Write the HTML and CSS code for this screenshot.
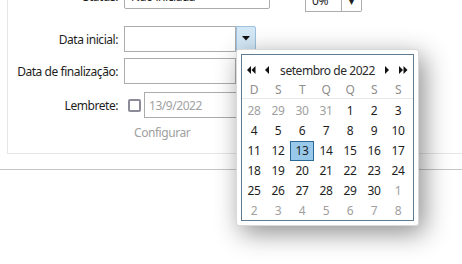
FILE: index.html
```html
<!DOCTYPE html>
<html lang="pt">
<head>
  <meta charset="UTF-8">
  <title>Tarefa</title>
  <link rel="stylesheet" href="styles.css">
</head>
<body>
  <div class="panel">
    <div class="row row-status">
      <span class="row-label">Status:</span>
      <div class="select">Não iniciada<span class="caret">&#9662;</span></div>
      <div class="percent">
        <span class="percent-value">0%</span>
        <span class="spin">&#9662;</span>
      </div>
    </div>

    <div class="row row-start">
      <span class="row-label">Data inicial:</span>
      <div class="input date-input"></div>
      <div class="drop-btn">
        <svg width="8" height="5" viewBox="0 0 8 5"><path d="M0 0H8L4 4.5Z" fill="#111"/></svg>
      </div>
    </div>

    <div class="row row-end">
      <span class="row-label">Data de finalização:</span>
      <div class="input date-input"></div>
    </div>

    <div class="row row-reminder">
      <span class="row-label">Lembrete:</span>
      <span class="checkbox"></span>
      <div class="input reminder-input">13/9/2022</div>
    </div>

    <div class="configure">Configurar</div>
  </div>

  <div class="divider"></div>

  <!-- popup do calendário -->
  <div class="calendar">
    <div class="calendar-inner">
      <div class="cal-header">
        <span class="nav nav-left">
          <svg width="9" height="8" viewBox="0 0 9 8"><path d="M0 4L4 0V8Z M4.5 4L8.5 0V8Z" fill="#111"/></svg>
          <svg width="5" height="8" viewBox="0 0 5 8"><path d="M0 4L4 0V8Z" fill="#111"/></svg>
        </span>
        <span class="cal-title">setembro de 2022</span>
        <span class="nav nav-right">
          <svg width="5" height="8" viewBox="0 0 5 8"><path d="M4 4L0 0V8Z" fill="#111"/></svg>
          <svg width="9" height="8" viewBox="0 0 9 8"><path d="M4 4L0 0V8Z M8.5 4L4.5 0V8Z" fill="#111"/></svg>
        </span>
      </div>
      <div class="cal-days">
        <span>D</span><span>S</span><span>T</span><span>Q</span><span>Q</span><span>S</span><span>S</span>
      </div>
      <div class="cal-grid">
        <span class="other">28</span><span class="other">29</span><span class="other">30</span><span class="other">31</span><span>1</span><span>2</span><span>3</span>
        <span>4</span><span>5</span><span>6</span><span>7</span><span>8</span><span>9</span><span>10</span>
        <span>11</span><span>12</span><span class="selected">13</span><span>14</span><span>15</span><span>16</span><span>17</span>
        <span>18</span><span>19</span><span>20</span><span>21</span><span>22</span><span>23</span><span>24</span>
        <span>25</span><span>26</span><span>27</span><span>28</span><span>29</span><span>30</span><span class="other">1</span>
        <span class="other">2</span><span class="other">3</span><span class="other">4</span><span class="other">5</span><span class="other">6</span><span class="other">7</span><span class="other">8</span>
      </div>
    </div>
  </div>
</body>
</html>
```

FILE: styles.css
```css
body {
  margin: 0;
  background: #fff;
  font-family: 'Noto Sans', sans-serif;
  font-size: 12px;
  letter-spacing: -0.45px;
  color: #1e1e1e;
  overflow: hidden;
}
.panel {
  margin: -17px 0 0 7px;
  border-left: 1px solid #e6e6e6;
  border-bottom: 1px solid #e6e6e6;
  padding-bottom: 13px;
}
.row {
  display: flex;
  align-items: center;
  height: 26px;
}
.row-label {
  width: 110px;
  padding-right: 6px;
  text-align: right;
}
.row-start {
  margin-top: 17px;
}
.row-end {
  margin-top: 6px;
}
.row-reminder {
  margin-top: 8px;
}
.select {
  width: 146px;
  height: 26px;
  box-sizing: border-box;
  border: 1px solid #acacac;
  border-radius: 2px;
  padding: 0 6px;
  display: flex;
  align-items: center;
  justify-content: space-between;
}
.caret {
  font-size: 10px;
}
.percent {
  display: flex;
  align-self: flex-start;
  margin: 5px 0 0 35px;
  height: 24px;
}
.percent-value {
  width: 37px;
  box-sizing: border-box;
  border: 1px solid #acacac;
  padding: 3px 0 0 6px;
}
.spin {
  width: 20px;
  box-sizing: border-box;
  border: 1px solid #acacac;
  border-left: none;
  border-radius: 0 2px 2px 0;
  font-size: 10px;
  text-align: center;
  padding-top: 5px;
}
.input {
  height: 26px;
  box-sizing: border-box;
  border: 1px solid #acacac;
  background: #fff;
}
.date-input {
  width: 112px;
}
.drop-btn {
  width: 20px;
  height: 25px;
  box-sizing: border-box;
  margin-top: -2px;
  border: 1px solid #9dc1df;
  border-radius: 0 2px 2px 0;
  background: #d3e7f5;
  display: flex;
  align-items: center;
  justify-content: center;
}
.checkbox {
  width: 13px;
  height: 13px;
  box-sizing: border-box;
  margin-left: 4px;
  border: 2px solid #8c8c99;
  border-radius: 2px;
}
.reminder-input {
  width: 120px;
  margin-left: 3px;
  padding: 4px 0 0 4px;
  color: #a2a2a2;
}
.configure {
  margin: 6px 0 0 126px;
  height: 16px;
  color: #a0a0a0;
}
.divider {
  margin-top: 15px;
  border-top: 1px solid #c6c6c6;
}
.calendar {
  position: absolute;
  left: 236px;
  top: 49px;
  width: 183px;
  height: 177px;
  box-sizing: border-box;
  padding: 4px;
  background: #fff;
  border: 1px solid #d9d9d9;
  border-radius: 3px;
  box-shadow: 5px 7px 26px rgba(0, 0, 0, 0.45);
}
.calendar-inner {
  height: 100%;
  box-sizing: border-box;
  border: 1px solid #5d7b93;
}
.cal-header {
  display: flex;
  align-items: center;
  justify-content: space-between;
  height: 28px;
  padding: 2px 5px 0 5px;
  box-sizing: border-box;
  color: #2a2a2a;
}
.nav {
  display: flex;
  align-items: center;
  gap: 9px;
}
.cal-days,
.cal-grid {
  display: grid;
  grid-template-columns: repeat(7, 24px);
  text-align: center;
}
.cal-days {
  height: 14px;
  line-height: 14px;
  color: #8e8e8e;
  border-bottom: 1px solid #e8e8e8;
  padding-bottom: 1px;
}
.cal-grid {
  margin-top: 2px;
  grid-auto-rows: 20px;
  line-height: 20px;
}
.cal-grid .other {
  color: #a0a0a0;
}
.cal-grid .selected {
  background: #99c9ea;
  border: 1px solid #2b6894;
  line-height: 18px;
}
```
